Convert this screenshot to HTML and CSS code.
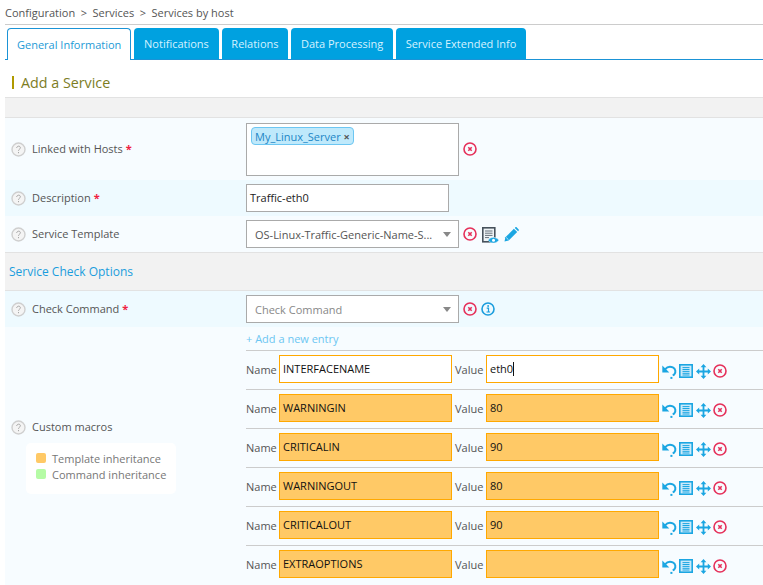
FILE: index.html
```html
<!DOCTYPE html>
<html lang="en">
<head>
<meta charset="utf-8">
<title>Services by host</title>
<link rel="stylesheet" href="styles.css">
</head>
<body>
<svg class="defs" width="0" height="0" aria-hidden="true">
  <symbol id="i-del" viewBox="0 0 14 14"><circle cx="7" cy="7" r="6" fill="none" stroke="#e5305a" stroke-width="1.6"/><path d="M5.300 5.300l3.400 3.400M8.700 5.300l-3.400 3.400" stroke="#e5305a" stroke-width="1.6"/></symbol>
  <symbol id="i-info" viewBox="0 0 14 14"><circle cx="7" cy="7" r="6" fill="none" stroke="#1b9ddd" stroke-width="1.600"/><path d="M5.700 6.200h1.800v3.600M5.500 10h3.600" fill="none" stroke="#1b9ddd" stroke-width="1.200"/><rect x="6.300" y="3.200" width="1.700" height="1.600" fill="#1b9ddd"/></symbol>
  <symbol id="i-help" viewBox="0 0 15 15"><circle cx="7.500" cy="7.500" r="6.500" fill="#f4f4f4" stroke="#cfcfcf" stroke-width="1.400"/><path d="M5.700 6c0-2.400 3.700-2.400 3.700-.2 0 1.400-1.900 1.400-1.900 3" fill="none" stroke="#a8a8a8" stroke-width="1"/><rect x="7" y="10" width="1" height="1.200" fill="#a8a8a8"/></symbol>
  <symbol id="i-undo" viewBox="0 0 15 15"><path d="M3 5.400C5 3 8.200 2.200 10.800 3.400c2.900 1.400 3.300 4.900 1.500 7l-1.500 1.100" fill="none" stroke="#1ba6e2" stroke-width="2"/><path d="M.3 1.600v7h7z" fill="#1ba6e2"/><rect x="8.400" y="12.900" width="2" height="2" fill="#1ba6e2"/></symbol>
  <symbol id="i-list" viewBox="0 0 14 14"><rect x=".8" y=".8" width="12.400" height="12.400" fill="#cdeafa" stroke="#1ba6e2" stroke-width="1.600"/><path d="M3.500 3.600h7M3.500 5.500h7M3.500 7.400h7M3.500 9.300h7M3.500 11h7" stroke="#1ba6e2" stroke-width="1"/></symbol>
  <symbol id="i-move" viewBox="0 0 15 15"><path d="M7.500 2v11M2 7.500h11" stroke="#1ba6e2" stroke-width="1.800"/><path d="M7.500 0l2.900 3.200H4.600zM7.500 15l2.900-3.200H4.600zM0 7.500l3.200-2.900v5.800zM15 7.500l-3.200-2.900v5.800z" fill="#1ba6e2"/></symbol>
  <symbol id="i-doc" viewBox="0 0 17 17"><rect x=".8" y=".8" width="12" height="14" fill="#eef3f6" stroke="#47525c" stroke-width="1.600"/><path d="M3 4h7.500M3 6.200h7.500M3 8.400h7.500M3 10.600h4" stroke="#66717a" stroke-width="1"/><path d="M6 13.200c3-3.800 7.600-3.800 11 0-3.400 3.800-8 3.800-11 0z" fill="#1ba6e2" stroke="#fff" stroke-width=".5"/><circle cx="11.500" cy="13.200" r="1.500" fill="#fff"/></symbol>
  <symbol id="i-pen" viewBox="0 0 15 15"><path d="M.5 14.500l.9-4.200 8.500-8.500 3.300 3.300-8.500 8.500z" fill="#1ba6e2"/><path d="M10.800.9l.6-.6c.4-.3.900-.3 1.200 0l2.100 2.100c.3.300.3.800 0 1.200l-.6.600z" fill="#1ba6e2"/><path d="M2.200 10.500l2.300 2.300" stroke="#fff" stroke-width=".7"/></symbol>
</svg>

<nav class="crumbs"><span>Configuration</span><span class="sep">&gt;</span><span>Services</span><span class="sep">&gt;</span><span>Services by host</span></nav>

<div class="tabs">
  <a class="tab active">General Information</a>
  <a class="tab">Notifications</a>
  <a class="tab">Relations</a>
  <a class="tab">Data Processing</a>
  <a class="tab">Service Extended Info</a>
</div>

<h1 class="title"><i class="bar"></i>Add a Service</h1>

<div class="band"></div>

<div class="row light hosts">
  <div class="label"><svg class="help"><use href="#i-help"/></svg><span>Linked with Hosts</span><b class="req">*</b></div>
  <div class="field">
    <div class="box"><span class="chip">My_Linux_Server <i class="chip-x">×</i></span></div>
    <svg class="ic del"><use href="#i-del"/></svg>
  </div>
</div>

<div class="row alt desc">
  <div class="label"><svg class="help"><use href="#i-help"/></svg><span>Description</span><b class="req">*</b></div>
  <div class="field"><div class="input">Traffic-eth0</div></div>
</div>

<div class="row light tmpl">
  <div class="label"><svg class="help"><use href="#i-help"/></svg><span>Service Template</span></div>
  <div class="field">
    <div class="select"><span>OS-Linux-Traffic-Generic-Name-S...</span><i class="caret"></i></div>
    <svg class="ic del"><use href="#i-del"/></svg>
    <svg class="ic doc"><use href="#i-doc"/></svg>
    <svg class="ic pen"><use href="#i-pen"/></svg>
  </div>
</div>

<div class="section">Service Check Options</div>

<div class="row alt cmd">
  <div class="label"><svg class="help"><use href="#i-help"/></svg><span>Check Command</span><b class="req">*</b></div>
  <div class="field">
    <div class="select muted"><span>Check Command</span><i class="caret"></i></div>
    <svg class="ic del"><use href="#i-del"/></svg>
    <svg class="ic info"><use href="#i-info"/></svg>
  </div>
</div>

<div class="row light macros">
  <div class="macro-label">
    <div class="label"><svg class="help"><use href="#i-help"/></svg><span>Custom macros</span></div>
    <div class="legend">
      <div class="legend-item"><i class="swatch orange"></i>Template inheritance</div>
      <div class="legend-item"><i class="swatch green"></i>Command inheritance</div>
    </div>
  </div>
  <div class="macro-list">
    <a class="add">+ Add a new entry</a>
    <div class="macro"><span class="m-name">Name</span><div class="m-in">INTERFACENAME</div><span class="m-val">Value</span><div class="m-in">eth0<i class="cursor"></i></div><svg class="a undo"><use href="#i-undo"/></svg><svg class="a list"><use href="#i-list"/></svg><svg class="a move"><use href="#i-move"/></svg><svg class="a adel"><use href="#i-del"/></svg></div>
    <div class="macro"><span class="m-name">Name</span><div class="m-in tpl">WARNINGIN</div><span class="m-val">Value</span><div class="m-in tpl">80</div><svg class="a undo"><use href="#i-undo"/></svg><svg class="a list"><use href="#i-list"/></svg><svg class="a move"><use href="#i-move"/></svg><svg class="a adel"><use href="#i-del"/></svg></div>
    <div class="macro"><span class="m-name">Name</span><div class="m-in tpl">CRITICALIN</div><span class="m-val">Value</span><div class="m-in tpl">90</div><svg class="a undo"><use href="#i-undo"/></svg><svg class="a list"><use href="#i-list"/></svg><svg class="a move"><use href="#i-move"/></svg><svg class="a adel"><use href="#i-del"/></svg></div>
    <div class="macro"><span class="m-name">Name</span><div class="m-in tpl">WARNINGOUT</div><span class="m-val">Value</span><div class="m-in tpl">80</div><svg class="a undo"><use href="#i-undo"/></svg><svg class="a list"><use href="#i-list"/></svg><svg class="a move"><use href="#i-move"/></svg><svg class="a adel"><use href="#i-del"/></svg></div>
    <div class="macro"><span class="m-name">Name</span><div class="m-in tpl">CRITICALOUT</div><span class="m-val">Value</span><div class="m-in tpl">90</div><svg class="a undo"><use href="#i-undo"/></svg><svg class="a list"><use href="#i-list"/></svg><svg class="a move"><use href="#i-move"/></svg><svg class="a adel"><use href="#i-del"/></svg></div>
    <div class="macro"><span class="m-name">Name</span><div class="m-in tpl">EXTRAOPTIONS</div><span class="m-val">Value</span><div class="m-in tpl"></div><svg class="a undo"><use href="#i-undo"/></svg><svg class="a list"><use href="#i-list"/></svg><svg class="a move"><use href="#i-move"/></svg><svg class="a adel"><use href="#i-del"/></svg></div>
  </div>
</div>
</body>
</html>
```
FILE: styles.css
```css
* { box-sizing: border-box; }
html, body { height: 585px; overflow: hidden; }
body { margin: 0; padding-left: 5px; background: #fff; font: 11px/15px "Open Sans", sans-serif; color: #555; }
.defs { position: absolute; }
.crumbs { height: 25px; border-bottom: 1px solid #ccc; padding-top: 5px; font-size: 11px; line-height: 16px; color: #555; display: flex; }
.crumbs .sep { margin: 0 5.5px; }
.tabs { height: 35px; display: flex; gap: 3px; padding: 3px 0 0 2px; border-bottom: 1px solid #1b93d6; }
.tab { height: 31px; padding: 8px 9.75px 0; background: #00a1e0; color: #d6f2ff; border-radius: 4px 4px 0 0; font-size: 11px; line-height: 16px; }
.tab.active { height: 32px; padding: 8px 9px 0; background: #fff; color: #1d9ad6; border: 1px solid #1b93d6; border-bottom: 0; }
.title { margin: 0; height: 37px; padding: 8px 0 0 7px; font-size: 14.3px; line-height: 20px; font-weight: 400; color: #7d7d1f; display: flex; align-items: center; }
.title .bar { width: 2px; height: 13px; background: #b09a00; margin-right: 7px; }
.band { height: 21px; background: #f2f2f2; border-top: 1px solid #e2e2e2; border-bottom: 1px solid #e2e2e2; }
.row { display: flex; }
.light { background: #f7fcff; }
.alt { background: #eefaff; }
.label { width: 241px; display: flex; align-items: center; padding: 0 0 2px 6px; color: #555; flex: none; }
.help { width: 15px; height: 15px; margin: 2px 6px 0 0; flex: none; }
.req { color: #f0203f; font-weight: 700; margin-left: 3px; font-size: 11px; }
.field { display: flex; align-items: center; }
.hosts { height: 62px; }
.desc { height: 36px; }
.tmpl { height: 36px; }
.cmd { height: 36px; }
.box { width: 213px; height: 53px; background: #fff; border: 1px solid #aaa; padding: 3px 4px; }
.chip { display: inline-block; height: 18px; line-height: 15px; padding: 1px 3px 0 3px; background: #bfe9fb; border: 1px solid #6cc6f2; border-radius: 4px; color: #1c86c6; font-size: 11px; }
.chip-x { font-style: normal; font-weight: 700; color: #555; }
.input { width: 203px; height: 28px; background: #fff; border: 1px solid #aaa; padding-left: 3px; line-height: 26px; color: #222; }
.select { width: 213px; height: 28px; background: #fff; border: 1px solid #aaa; padding: 2px 8px 0; line-height: 24px; color: #555; display: flex; justify-content: space-between; align-items: center; }
.select.muted { color: #888; }
.caret { width: 0; height: 0; border-left: 4px solid transparent; border-right: 4px solid transparent; border-top: 5px solid #888; margin: 0 -1px 2px 0; }
.ic { width: 14px; height: 14px; margin-left: 4px; flex: none; }
.doc { width: 17px; height: 17px; margin-left: 5px; margin-top: 2px; }
.pen { width: 15px; height: 15px; margin-left: 5px; }
.section { height: 39px; background: #f2f2f2; border-top: 1px solid #e2e2e2; border-bottom: 1px solid #e2e2e2; padding: 11px 0 0 4px; font-size: 12px; line-height: 16px; color: #1b9ddd; }
.macros { height: 258px; }
.macro-label { width: 241px; flex: none; padding-top: 91px; }
.macro-label .label { height: 18px; width: auto; }
.legend { margin: 7px 0 0 21px; width: 150px; height: 51px; background: #fff; border-radius: 5px; padding: 8px 0 0 10px; font-size: 11px; line-height: 16px; color: #777; }
.legend-item { display: flex; align-items: center; }
.swatch { width: 10px; height: 10px; border-radius: 2px; margin: 0 6px 2px 0; flex: none; }
.orange { background: #ffc966; }
.green { background: #b5fba5; }
.macro-list { flex: 1; }
.add { display: block; height: 23px; padding-top: 4px; color: #6cc6f2; font-size: 11px; line-height: 15px; }
.macro { height: 39px; border-top: 1px solid #ccc; padding-bottom: 2px; display: flex; align-items: center; }
.m-name { width: 33px; flex: none; }
.m-val { width: 34px; flex: none; padding-left: 3px; }
.m-in { width: 173px; height: 28px; background: #fff; border: 1px solid #ffa800; padding-left: 3px; line-height: 26px; color: #111; display: flex; align-items: center; }
.m-in.tpl { background: #ffc966; }
.cursor { width: 1px; height: 14px; background: #111; display: inline-block; }
.a { flex: none; margin-top: 4px; }
.undo { width: 15px; height: 15px; margin-left: 3px; }
.list { width: 14px; height: 14px; margin-left: 2px; }
.move { width: 15px; height: 15px; margin-left: 3px; }
.adel { width: 14px; height: 14px; margin-left: 2px; }
```
